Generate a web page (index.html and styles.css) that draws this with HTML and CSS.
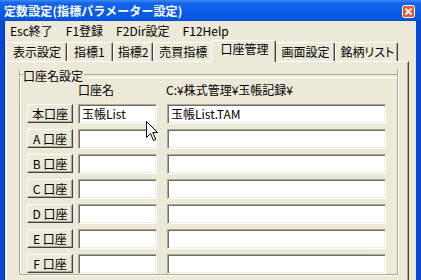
FILE: index.html
```html
<!DOCTYPE html>
<html lang="ja">
<head>
<meta charset="utf-8">
<link rel="stylesheet" href="styles.css">
</head>
<body>
<div class="window">
  <div class="titlebar">
    <span class="title">定数設定(指標パラメーター設定)</span>
    <span class="close"><svg width="13" height="13" viewBox="0 0 13 13"><rect x="0.5" y="0.5" width="12" height="12" rx="2" fill="#E45A2C" stroke="#fff" stroke-width="1"/><path d="M3.5 3.5 L9.5 9.5 M9.5 3.5 L3.5 9.5" stroke="#fff" stroke-width="1.8"/></svg></span>
  </div>
  <div class="frame">
    <div class="menubar">
      <span class="menu">Esc終了</span>
      <span class="menu">F1登録</span>
      <span class="menu">F2Dir設定</span>
      <span class="menu">F12Help</span>
    </div>
    <div class="tabs">
      <div class="tab t1">表示設定</div>
      <div class="tab t2">指標1</div>
      <div class="tab t3">指標2</div>
      <div class="tab t4">売買指標</div>
      <div class="tab sel">口座管理</div>
      <div class="tab t6">画面設定</div>
      <div class="tab t7">銘柄<span class="kana">リスト</span></div>
    </div>
    <div class="panel">
      <div class="group">
        <div class="group-head"><span class="legend">口座名設定</span></div>
        <div class="grid">
          <div></div><div class="hdr">口座名</div><div class="hdr path">C:¥株式管理¥玉帳記録¥</div>
          <div class="btn">本口座</div><div class="edit">玉帳List</div><div class="edit wide">玉帳List.TAM</div>
          <div class="btn">A 口座</div><div class="edit"></div><div class="edit wide"></div>
          <div class="btn">B 口座</div><div class="edit"></div><div class="edit wide"></div>
          <div class="btn">C 口座</div><div class="edit"></div><div class="edit wide"></div>
          <div class="btn">D 口座</div><div class="edit"></div><div class="edit wide"></div>
          <div class="btn">E 口座</div><div class="edit"></div><div class="edit wide"></div>
          <div class="btn">F 口座</div><div class="edit"></div><div class="edit wide"></div>
        </div>
      </div>
    </div>
  </div>
  <svg class="cursor" width="13" height="21" viewBox="0 0 13 21"><path d="M0.5 0.5 L0.5 16.5 L4.5 12.5 L7.5 19.5 L9.8 18.5 L6.8 11.5 L11.5 11.5 Z" fill="#fff" stroke="#000" stroke-width="1" stroke-linejoin="miter"/></svg>
</div>
</body>
</html>
```
FILE: styles.css
```css
* { box-sizing: border-box; }
body {
  margin: 0;
  font-family: "Noto Sans CJK JP", sans-serif;
  font-size: 12px;
  color: #000;
  background: #ECE9D8;
}
.window {
  position: relative;
  width: 421px;
  height: 280px;
  overflow: hidden;
  display: flex;
  flex-direction: column;
  background: #ECE9D8;
}
.titlebar {
  height: 21px;
  flex: none;
  display: flex;
  align-items: center;
  justify-content: space-between;
  padding: 0 6px 0 4px;
  background: linear-gradient(to bottom, #3B8BF5 0px, #1665EC 3px, #0A5CE8 12px, #0657E0 19px, #0A47C8 21px);
}
.title {
  color: #fff;
  font-weight: bold;
  font-size: 12px;
  line-height: 14px;
  margin-top: 1px;
  letter-spacing: 0.1px;
}
.close { display: flex; margin-top: 1px; }
.frame {
  flex: 1;
  display: flex;
  flex-direction: column;
  border-left: 4px solid #0846D8;
  border-right: 5px solid #0846D8;
  box-shadow: inset 1px 0 0 #0033C5;
}
.menubar {
  height: 19px;
  display: flex;
  align-items: center;
  gap: 13px;
  padding-left: 6px;
  line-height: 14px;
}
.tabs {
  height: 21px;
  display: flex;
  align-items: flex-end;
  padding-left: 2px;
}
.tab {
  height: 19px;
  padding: 2px 5px 0 6px;
  line-height: 14px;
  border-top: 1px solid #fff;
  border-left: 1px solid #fff;
  border-right: 1px solid #404040;
  box-shadow: inset -1px 0 0 #ACA899;
  border-radius: 2px 2px 0 0;
}
.tab.t2 { padding-right: 7px; }
.tab.t3 { padding: 2px 4px 0 4px; }
.tab.t4 { padding-left: 5px; }
.tab.t7 { padding-right: 3px; padding-left: 4px; }
.kana { font-feature-settings: "palt"; }
.tab.sel {
  height: 22px;
  margin: 0 -2px -1px -2px;
  padding: 1px 7px 0 8px;
  position: relative;
  z-index: 1;
  background: #ECE9D8;
}
.panel {
  flex: 1;
  margin-left: 2px;
  margin-right: 7px;
  border-top: 1px solid #fff;
  border-left: 1px solid #fff;
  border-right: 1px solid #404040;
  box-shadow: inset -1px 0 0 #ACA899;
  padding: 7px 10px 0 12px;
}
.group {
  height: 206px;
  border: 1px solid #ACA899;
  border-top: none;
  box-shadow: inset 1px 0 0 #fff, 1px 0 0 #fff, 0 1px 0 #fff;
  padding: 0 9px 0 7px;
}
.group-head {
  display: flex;
  align-items: center;
  height: 14px;
  margin: 0 -10px 0 -8px;
}
.group-head::before,
.group-head::after {
  content: "";
  height: 2px;
  border-top: 1px solid #ACA899;
  border-bottom: 1px solid #fff;
}
.group-head::before { width: 4px; }
.group-head::after { flex: 1; }
.legend { padding: 0 1px 0 0; line-height: 14px; }
.grid {
  display: grid;
  grid-template-columns: 46px 79px 224px;
  grid-template-rows: 16px repeat(7, 20px);
  column-gap: 5px;
  row-gap: 5px;
}
.wide { margin-left: 5px; }
.hdr { line-height: 14px; align-self: end; margin-bottom: 2px; }
.hdr.path { margin-left: 4px; }
.btn {
  height: 19px;
  display: flex;
  align-items: center;
  justify-content: center;
  line-height: 14px;
  background: #ECE9D8;
  border-top: 1px solid #fff;
  border-left: 1px solid #fff;
  border-right: 1px solid #404040;
  border-bottom: 1px solid #404040;
  box-shadow: inset -1px -1px 0 #ACA899;
  white-space: pre;
}
.edit {
  height: 20px;
  background: #fff;
  border-top: 1px solid #ACA899;
  border-left: 1px solid #ACA899;
  border-right: 1px solid #fff;
  border-bottom: 1px solid #fff;
  box-shadow: inset 1px 1px 0 #716F64, inset -1px -1px 0 #F1EFE2;
  padding: 2px 3px;
  line-height: 14px;
  white-space: nowrap;
}
.cursor {
  position: absolute;
  left: 146px;
  top: 121px;
}
```
